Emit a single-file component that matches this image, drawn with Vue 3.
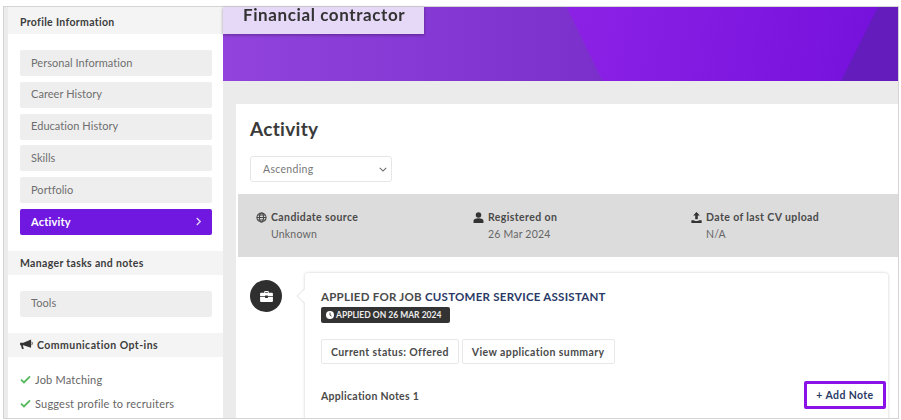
<template>
  <div class="page">
    <div class="frame">
      <aside class="sidebar">
        <h4 class="sec-head sec-head--first">Profile Information</h4>
        <nav class="nav">
          <a
            v-for="item in profileLinks"
            :key="item"
            class="nav__item"
            :class="{ 'nav__item--active': item === 'Activity' }"
          >
            {{ item }}
            <svg v-if="item === 'Activity'" class="nav__chevron" viewBox="0 0 8 10" width="7" height="9">
              <path d="M2 1l4 4-4 4" fill="none" stroke="#e6d8f7" stroke-width="1.5" />
            </svg>
          </a>
        </nav>

        <h4 class="sec-head">Manager tasks and notes</h4>
        <nav class="nav">
          <a class="nav__item">Tools</a>
        </nav>

        <h4 class="sec-head sec-head--icon">
          <svg viewBox="0 0 14 12" width="13" height="11">
            <path d="M0 4.2h3.5L12 .6v9L3.5 6.8H3l1 4H2L1 6.8H0z" fill="#333" />
            <path d="M12.6 3.2c1 .8 1 2.4 0 3.2" fill="none" stroke="#333" />
          </svg>
          Communication Opt-ins
        </h4>
        <ul class="opts">
          <li v-for="opt in optIns" :key="opt">
            <svg viewBox="0 0 12 10" width="11" height="9">
              <path d="M1 5.2l3.3 3L11 1.4" fill="none" stroke="#55b85c" stroke-width="2" />
            </svg>
            {{ opt }}
          </li>
        </ul>
      </aside>

      <main class="main">
        <header class="banner">
          <svg class="banner__art" viewBox="0 0 674 74" preserveAspectRatio="none">
            <defs>
              <linearGradient id="muted" x1="0" y1="0" x2="1" y2="0">
                <stop offset="0" stop-color="#9243de" />
                <stop offset="1" stop-color="#7b30cb" />
              </linearGradient>
            </defs>
            <polygon points="0,0 343,0 379,74 0,74" fill="url(#muted)" />
            <polygon points="654,0 674,0 674,74 617,74" fill="#641cbc" />
          </svg>
          <div class="banner__tab">Financial contractor</div>
        </header>

        <div class="content">
          <section class="panel">
            <h2 class="panel__title">Activity</h2>
            <div class="sort">
              Ascending
              <svg viewBox="0 0 10 6" width="8" height="5">
                <path d="M1 1l4 4 4-4" fill="none" stroke="#666" stroke-width="1.3" />
              </svg>
            </div>

            <div class="stats">
              <div class="stat stat--source">
                <div class="stat__label">
                  <svg viewBox="0 0 12 12" width="11" height="11">
                    <g fill="none" stroke="#444" stroke-width="1.1">
                      <circle cx="6" cy="6" r="5" />
                      <ellipse cx="6" cy="6" rx="2.2" ry="5" />
                      <path d="M1 6h10M1.8 3.4h8.4M1.8 8.6h8.4" />
                    </g>
                  </svg>
                  Candidate source
                </div>
                <div class="stat__value">Unknown</div>
              </div>
              <div class="stat stat--registered">
                <div class="stat__label">
                  <svg viewBox="0 0 12 12" width="11" height="11">
                    <circle cx="6" cy="3.2" r="3" fill="#333" />
                    <path d="M.6 12V9.6C.6 7.8 2.4 6.8 6 6.8s5.4 1 5.4 2.8V12z" fill="#333" />
                  </svg>
                  Registered on
                </div>
                <div class="stat__value">26 Mar 2024</div>
              </div>
              <div class="stat">
                <div class="stat__label">
                  <svg viewBox="0 0 12 12" width="11" height="11">
                    <path d="M6 0l3.6 3.8H7.4V8H4.6V3.8H2.4z" fill="#333" />
                    <path d="M.4 9h3.4v.8h4.4V9h3.4v3H.4z" fill="#333" />
                  </svg>
                  Date of last CV upload
                </div>
                <div class="stat__value">N/A</div>
              </div>
            </div>

            <div class="timeline">
              <div class="timeline__dot">
                <svg viewBox="0 0 14 12" width="13" height="11">
                  <path d="M4.5 2V1a1 1 0 0 1 1-1h3a1 1 0 0 1 1 1v1H13a1 1 0 0 1 1 1v2.6H8.5v-.8h-3v.8H0V3a1 1 0 0 1 1-1zm1 0h3V1h-3z" fill="#fff" />
                  <path d="M0 6.6h5.5v1h3v-1H14V11a1 1 0 0 1-1 1H1a1 1 0 0 1-1-1z" fill="#fff" />
                </svg>
              </div>
              <article class="card">
                <h3 class="card__title">APPLIED FOR JOB <span>CUSTOMER SERVICE ASSISTANT</span></h3>
                <div class="badge">
                  <svg viewBox="0 0 10 10" width="8" height="8">
                    <circle cx="5" cy="5" r="5" fill="#fff" />
                    <path d="M5 2v3.2l2 1.2" fill="none" stroke="#333" stroke-width="1.1" />
                  </svg>
                  APPLIED ON 26 MAR 2024
                </div>
                <div class="actions">
                  <button class="btn">Current status: Offered</button>
                  <button class="btn">View application summary</button>
                </div>
                <div class="notes">
                  <span class="notes__label">Application Notes 1</span>
                  <button class="add-note">+ Add Note</button>
                </div>
              </article>
            </div>
          </section>
        </div>
      </main>
    </div>
  </div>
</template>

<script setup>
const profileLinks = [
  "Personal Information",
  "Career History",
  "Education History",
  "Skills",
  "Portfolio",
  "Activity",
];
const optIns = ["Job Matching", "Suggest profile to recruiters"];
</script>

<style>
html,
body {
  margin: 0;
  background: #fff;
}
</style>

<style scoped>
.page {
  width: 901px;
  height: 420px;
  padding: 6px 2px 1px 3px;
  box-sizing: border-box;
  font-family: Lato, "Liberation Sans", sans-serif;
  color: #444;
  overflow: hidden;
}

/* the reference is a slightly soft, upscaled screenshot */
.frame {
  display: flex;
  height: 100%;
  box-sizing: border-box;
  border: 1px solid #d4d4d4;
  background: #ebebeb;
  padding-left: 4px;
  filter: blur(0.4px);
}

.sidebar {
  width: 215px;
  flex-shrink: 0;
  background: #fff;
  overflow: hidden;
}

.sec-head {
  margin: 0;
  height: 24px;
  padding-left: 12px;
  background: #f4f4f4;
  font-size: 10.5px;
  font-weight: 700;
  line-height: 24px;
  color: #3c3c3c;
  letter-spacing: 0.33px;
}

.sec-head--first {
  height: 27px;
  line-height: 30px;
}

.sec-head--icon {
  display: flex;
  align-items: center;
  gap: 4px;
  letter-spacing: 0.45px;
}

.nav {
  display: flex;
  flex-direction: column;
  gap: 5.8px;
  padding: 16px 11px 16px 12px;
}

.nav__item {
  display: flex;
  align-items: center;
  justify-content: space-between;
  height: 26px;
  box-sizing: border-box;
  padding: 0 11px 2px;
  border-radius: 2px;
  background: #eeeeee;
  font-size: 11px;
  color: #6e6e6e;
  letter-spacing: 0.05px;
}

.nav__item--active {
  padding-bottom: 1px;
  background: #7018e0;
  color: #fff;
  font-weight: 700;
  letter-spacing: 0.2px;
}

.nav__chevron {
  margin-right: -1px;
}

.opts {
  list-style: none;
  margin: 0;
  padding: 11px 0 0 12px;
  font-size: 11px;
  color: #666;
  letter-spacing: 0.2px;
}

.opts li {
  display: flex;
  align-items: center;
  gap: 4px;
  height: 23.5px;
}

.main {
  flex: 1;
  min-width: 0;
  display: flex;
  flex-direction: column;
}

.banner {
  position: relative;
  height: 74px;
  flex-shrink: 0;
  background: linear-gradient(100deg, #9030e8 0%, #8a20e4 55%, #7410dc 100%);
}

.banner__art {
  position: absolute;
  inset: 0;
  width: 100%;
  height: 100%;
}

.banner__tab {
  position: relative;
  width: 181px;
  height: 27px;
  padding-left: 20px;
  background: #e6d8f7;
  box-shadow: 0 1px 3px rgba(0, 0, 0, 0.35);
  font-size: 17px;
  font-weight: 700;
  line-height: 15px;
  color: #333;
  letter-spacing: 0.6px;
}

.content {
  flex: 1;
  min-height: 0;
  padding: 23px 0 0 13px;
}

.panel {
  height: 100%;
  background: #fff;
  padding-left: 2px;
  overflow: hidden;
}

.panel__title {
  margin: 0;
  padding: 13px 0 0 12px;
  font-size: 19px;
  font-weight: 700;
  line-height: 24px;
  color: #3a3a3a;
  letter-spacing: 0.3px;
}

.sort {
  display: flex;
  align-items: center;
  justify-content: space-between;
  width: 142px;
  height: 26px;
  box-sizing: border-box;
  margin: 15px 0 12px 12px;
  padding: 0 4px 0 12px;
  border: 1px solid #e6e6e6;
  border-radius: 3px;
  font-size: 10.5px;
  color: #777;
  letter-spacing: 0.3px;
}

.stats {
  display: flex;
  height: 63px;
  box-sizing: border-box;
  padding: 16px 0 0 18px;
  background: #dcdcdc;
}

.stat {
  font-size: 10.5px;
  letter-spacing: 0.2px;
}

.stat--source {
  width: 217px;
}

.stat--registered {
  width: 218px;
}

.stat__label {
  display: flex;
  align-items: center;
  gap: 4px;
  height: 14px;
  font-weight: 700;
  color: #4a4a4a;
  letter-spacing: 0.4px;
}

.stat__value {
  margin-top: 4px;
  padding-left: 15px;
  color: #666;
}

.timeline {
  display: flex;
  gap: 23px;
  padding: 16px 10px 0 12px;
}

.timeline__dot {
  display: flex;
  align-items: center;
  justify-content: center;
  width: 32px;
  height: 32px;
  margin-top: 7px;
  flex-shrink: 0;
  border-radius: 50%;
  background: #2f2f2f;
}

.card {
  position: relative;
  flex: 1;
  height: 180px;
  box-sizing: border-box;
  padding: 17px 2px 0 16px;
  border-radius: 3px;
  background: #fff;
  box-shadow: 0 0 3px rgba(0, 0, 0, 0.22);
}

.card::before {
  content: "";
  position: absolute;
  left: -5px;
  top: 18px;
  width: 10px;
  height: 10px;
  background: #fff;
  box-shadow: -1px 1px 1px rgba(0, 0, 0, 0.1);
  transform: rotate(45deg);
}

.card__title {
  position: relative;
  margin: 0;
  font-size: 11.5px;
  font-weight: 700;
  line-height: 14px;
  color: #4a4a4a;
  letter-spacing: 0.25px;
}

.card__title span {
  color: #2a3a66;
}

.badge {
  display: flex;
  align-items: center;
  gap: 2px;
  width: 129px;
  height: 16px;
  box-sizing: border-box;
  margin-top: 3px;
  padding-left: 5px;
  border-radius: 2px;
  background: #333;
  font-size: 8.5px;
  font-weight: 700;
  color: #ececec;
}

.actions {
  display: flex;
  gap: 3px;
  margin-top: 16px;
}

.btn {
  height: 25px;
  padding: 0 9px;
  border: 1px solid #e8e8e8;
  border-radius: 2px;
  background: #fff;
  font-family: inherit;
  font-size: 10.5px;
  font-weight: 700;
  color: #4a4a4a;
  letter-spacing: 0.4px;
}

.notes {
  display: flex;
  align-items: center;
  justify-content: space-between;
  margin-top: 17px;
  font-size: 10.5px;
  font-weight: 700;
  color: #4a4a4a;
}

.notes__label {
  margin-top: 2px;
  letter-spacing: 0.3px;
}

.add-note {
  width: 82px;
  height: 28px;
  padding: 0;
  border: 3px solid #8a12e6;
  border-radius: 2px;
  background: #fff;
  font-family: inherit;
  font-size: 10.5px;
  font-weight: 700;
  color: #2a3a66;
  letter-spacing: 0.4px;
}
</style>
